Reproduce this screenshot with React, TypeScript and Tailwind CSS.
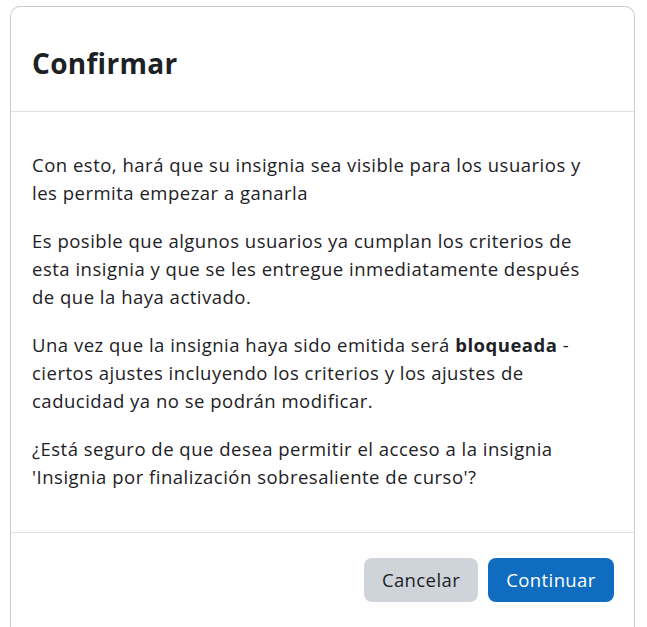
export default function App() {
  const font = { fontFamily: '"Open Sans", "Noto Sans", sans-serif' };

  return (
    <div className="min-h-screen bg-white pt-[6px] pl-[10px]" style={font}>
      <div className="w-[625px] rounded-t-[10px] border border-[#cdcdcd] border-b-0 bg-white text-[#1d2125]">
        {/* Header */}
        <div className="flex h-[105px] items-center border-b border-[#dee2e6] px-[21px] pt-[8px]">
          <h2 className="text-[28px] font-bold leading-none tracking-[0.3px]">Confirmar</h2>
        </div>

        {/* Body */}
        <div className="pl-[21px] pr-[30px] pt-[39px] pb-[21px] text-[18.5px] leading-[28px] tracking-[0.5px]">
          <p className="mb-[20px]">
            Con esto, hará que su insignia sea visible para los usuarios y les permita empezar a ganarla
          </p>
          <p className="mb-[20px]">
            Es posible que algunos usuarios ya cumplan los criterios de esta insignia y que se les entregue
            inmediatamente después de que la haya activado.
          </p>
          <p className="mb-[20px]">
            Una vez que la insignia haya sido emitida será <b className="font-bold">bloqueada</b> - ciertos
            ajustes incluyendo los criterios y los ajustes de caducidad ya no se podrán modificar.
          </p>
          <p className="mb-[20px]">
            ¿Está seguro de que desea permitir el acceso a la insignia 'Insignia por finalización
            sobresaliente de curso'?
          </p>
        </div>

        {/* Footer */}
        <div className="flex justify-end gap-[10px] border-t border-[#dee2e6] px-[20px] pt-[25px] pb-[30px]">
          <button className="h-[44px] w-[114px] rounded-[8px] bg-[#ced4da] text-[18.5px] tracking-[0.4px] text-[#1d2125]">
            Cancelar
          </button>
          <button className="h-[44px] w-[126px] rounded-[8px] bg-[#0f6cbf] text-[18.5px] tracking-[0.4px] text-white">
            Continuar
          </button>
        </div>
      </div>
    </div>
  );
}
